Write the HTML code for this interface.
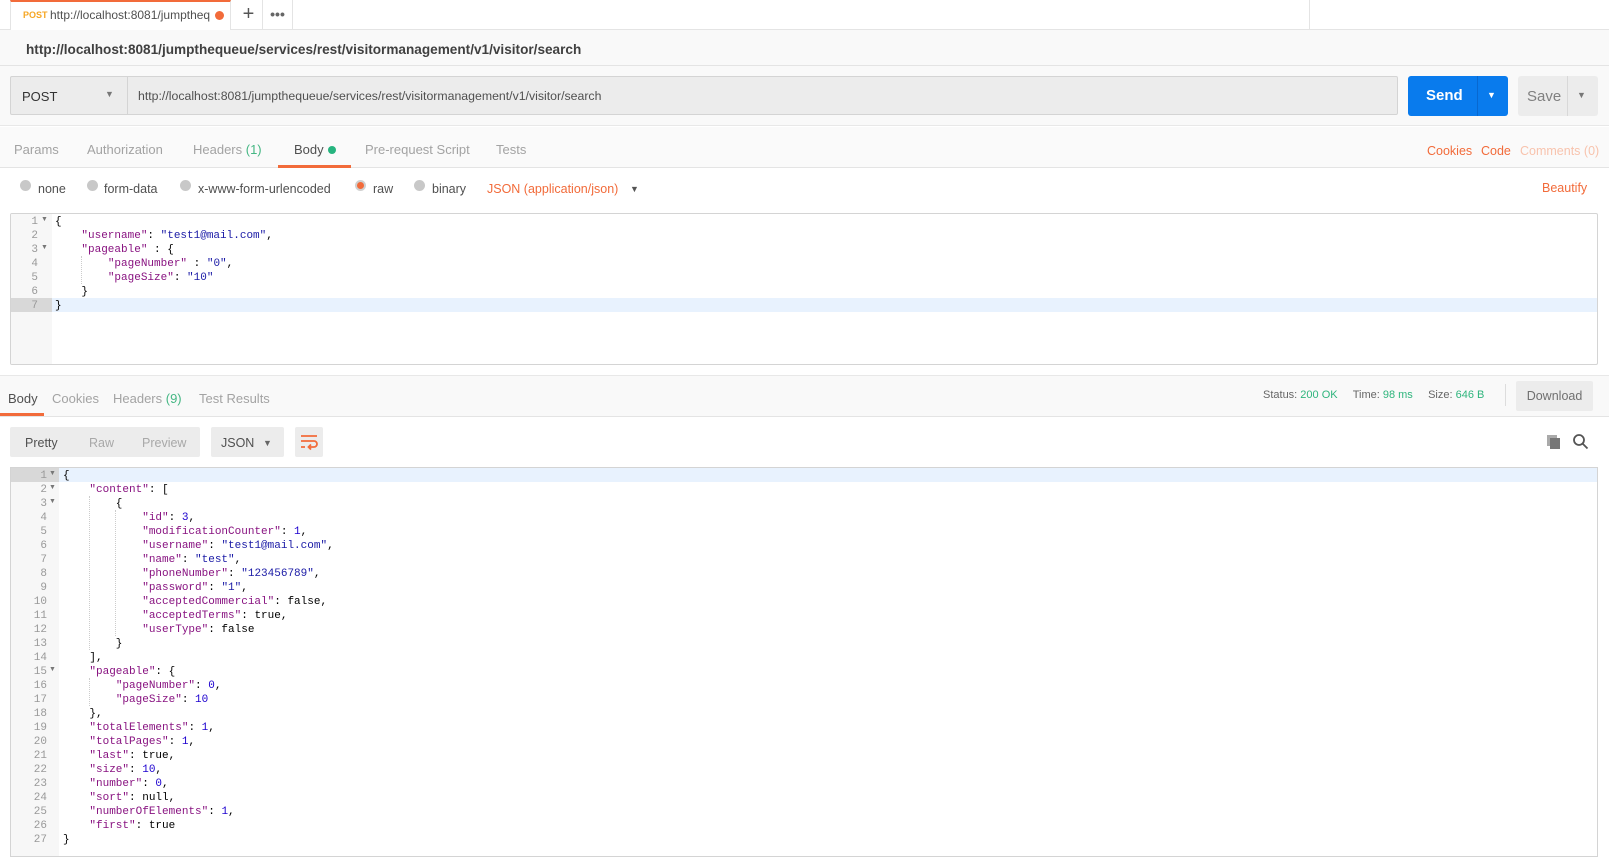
<!DOCTYPE html>
<html><head><meta charset="utf-8"><style>
*{margin:0;padding:0;box-sizing:border-box}
body{width:1609px;height:847px;overflow:hidden;background:#fff;font-family:"Liberation Sans",Arial,sans-serif;position:relative;color:#505050}
.a{position:absolute;white-space:pre}
.code{font-family:"Liberation Mono",monospace;font-size:11px;line-height:14px;color:#000}
.k{color:#881280}
.s{color:#1a1aa6}
.n{color:#1c00cf}
.g{position:absolute;font-family:"Liberation Mono",monospace;font-size:11px;line-height:14px;color:#999;text-align:right}
.tab{font-size:13px;color:#a3a3a3}
.rad{position:absolute;width:11px;height:11px;border-radius:50%;background:#c8c8c8}
</style></head><body>
<!-- tab bar -->
<div class="a" style="left:0;top:0;width:1609px;height:30px;background:#fff;border-bottom:1px solid #e4e4e4"></div>
<div class="a" style="left:10px;top:0;width:221px;height:31px;background:#fff;border-top:2px solid #f26b3a;border-right:1px solid #e4e4e4;border-left:1px solid #e4e4e4"></div>
<div class="a" style="left:23px;top:10px;font-size:9px;font-weight:bold;color:#f6a623">POST</div>
<div class="a" style="left:50px;top:8px;font-size:12px;color:#505050">http://localhost:8081/jumptheq</div>
<div class="rad" style="left:215px;top:11px;width:9px;height:9px;background:#f26b3a"></div>
<div class="a" style="left:235px;top:0;width:28px;height:30px;border-right:1px solid #e4e4e4;font-size:20px;color:#555;text-align:center;line-height:28px">+</div>
<div class="a" style="left:263px;top:0;width:30px;height:30px;border-right:1px solid #e4e4e4;font-size:14px;color:#666;text-align:center;line-height:28px;font-weight:bold">•••</div>
<div class="a" style="left:1309px;top:0;width:1px;height:29px;background:#e4e4e4"></div>
<!-- title -->
<div class="a" style="left:0;top:30px;width:1609px;height:36px;background:#f9f9f9;border-bottom:1px solid #e4e4e4"></div>
<div class="a" style="left:26px;top:42px;font-size:13.6px;color:#404040;font-weight:600">http://localhost:8081/jumpthequeue/services/rest/visitormanagement/v1/visitor/search</div>
<div class="a" style="left:0;top:66px;width:1609px;height:60px;background:#f9f9f9;border-bottom:1px solid #e8e8e8"></div>
<!-- request bar -->
<div class="a" style="left:10px;top:76px;width:1388px;height:39px;background:#ececec;border:1px solid #d4d4d4;border-radius:2px"></div>
<div class="a" style="left:127px;top:77px;width:1px;height:37px;background:#d4d4d4"></div>
<div class="a" style="left:22px;top:89px;font-size:13px;color:#333">POST</div>
<div class="a" style="left:105px;top:89px;font-size:9px;color:#777">▼</div>
<div class="a" style="left:138px;top:89px;font-size:12.3px;color:#505050">http://localhost:8081/jumpthequeue/services/rest/visitormanagement/v1/visitor/search</div>
<div class="a" style="left:1408px;top:76px;width:100px;height:40px;background:#097bed;border-radius:3px"></div>
<div class="a" style="left:1477px;top:76px;width:1px;height:40px;background:#0868d0"></div>
<div class="a" style="left:1426px;top:87px;font-size:15px;font-weight:bold;color:#fff">Send</div>
<div class="a" style="left:1487px;top:90px;font-size:9px;color:#fff">▼</div>
<div class="a" style="left:1518px;top:76px;width:80px;height:40px;background:#ececec;border-radius:3px"></div>
<div class="a" style="left:1567px;top:76px;width:1px;height:40px;background:#d8d8d8"></div>
<div class="a" style="left:1527px;top:88px;font-size:15px;color:#808080">Save</div>
<div class="a" style="left:1577px;top:90px;font-size:9px;color:#777">▼</div>
<!-- req tabs -->
<div class="a" style="left:0;top:127px;width:1609px;height:41px;background:#fafafa;border-bottom:1px solid #e4e4e4"></div>
<div class="a tab" style="left:14px;top:142px">Params</div>
<div class="a tab" style="left:87px;top:142px">Authorization</div>
<div class="a tab" style="left:193px;top:142px">Headers <span style="color:#45b784">(1)</span></div>
<div class="a tab" style="left:294px;top:142px;color:#505050">Body</div>
<div class="rad" style="left:328px;top:146px;width:8px;height:8px;background:#26b47f"></div>
<div class="a" style="left:278px;top:165px;width:73px;height:3px;background:#f26b3a"></div>
<div class="a tab" style="left:365px;top:142px">Pre-request Script</div>
<div class="a tab" style="left:496px;top:142px">Tests</div>
<div class="a" style="left:1427px;top:144px;font-size:12.5px;color:#f26b3a">Cookies</div>
<div class="a" style="left:1481px;top:144px;font-size:12.5px;color:#f26b3a">Code</div>
<div class="a" style="left:1520px;top:144px;font-size:12.5px;color:#f8c3ad">Comments (0)</div>
<!-- radios -->
<div class="rad" style="left:20px;top:180px"></div><div class="a" style="left:38px;top:182px;font-size:12.5px">none</div>
<div class="rad" style="left:87px;top:180px"></div><div class="a" style="left:104px;top:182px;font-size:12.5px">form-data</div>
<div class="rad" style="left:180px;top:180px"></div><div class="a" style="left:198px;top:182px;font-size:12.5px">x-www-form-urlencoded</div>
<div class="rad" style="left:355px;top:180px;background:#f26b3a;border:2px solid #d0d0d0"></div><div class="a" style="left:373px;top:182px;font-size:12.5px">raw</div>
<div class="rad" style="left:414px;top:180px"></div><div class="a" style="left:432px;top:182px;font-size:12.5px">binary</div>
<div class="a" style="left:487px;top:182px;font-size:12.5px;color:#f26b3a">JSON (application/json)</div>
<div class="a" style="left:630px;top:184px;font-size:9px;color:#555">▼</div>
<div class="a" style="left:1542px;top:181px;font-size:12.5px;color:#f26b3a">Beautify</div>
<!-- request editor -->
<div class="a" style="left:10px;top:213px;width:1588px;height:152px;border:1px solid #d4d4d4;border-radius:2px;background:#fff;overflow:hidden">
 <div class="a" style="left:0;top:0;width:41px;height:150px;background:#f7f7f7"></div>
 <div class="a" style="left:41px;top:84px;width:1546px;height:14px;background:#e8f2fe"></div>
 <div class="a" style="left:0;top:84px;width:41px;height:14px;background:#d8d8d8"></div>
 <div class="g" style="left:0;top:1px;width:27px">1
2
3
4
5
6
7</div>
 <div class="a" style="left:30px;top:2px;font-size:7px;color:#777">▼</div>
 <div class="a" style="left:30px;top:30px;font-size:7px;color:#777">▼</div>
 <div class="a" style="left:70px;top:42px;width:0;height:28px;border-left:1px dotted #ccc"></div>
 <div class="a code" style="left:44px;top:1px">{
    <span class="k">"username"</span>: <span class="s">"test1@mail.com"</span>,
    <span class="k">"pageable"</span> : {
        <span class="k">"pageNumber"</span> : <span class="s">"0"</span>,
        <span class="k">"pageSize"</span>: <span class="s">"10"</span>
    }
}</div>
</div>
<!-- response header -->
<div class="a" style="left:0;top:375px;width:1609px;height:42px;background:#f9f9f9;border-top:1px solid #e8e8e8;border-bottom:1px solid #e4e4e4"></div>
<div class="a tab" style="left:8px;top:391px;color:#505050">Body</div>
<div class="a tab" style="left:52px;top:391px">Cookies</div>
<div class="a tab" style="left:113px;top:391px">Headers <span style="color:#45b784">(9)</span></div>
<div class="a tab" style="left:199px;top:391px">Test Results</div>
<div class="a" style="left:0;top:413px;width:44px;height:3px;background:#f26b3a"></div>
<div class="a" style="left:1263px;top:389px;font-size:11px;color:#666">Status: <span style="color:#2fb57d">200 OK</span>&nbsp;&nbsp;&nbsp;&nbsp; Time: <span style="color:#2fb57d">98 ms</span>&nbsp;&nbsp;&nbsp;&nbsp; Size: <span style="color:#2fb57d">646 B</span></div>
<div class="a" style="left:1505px;top:384px;width:1px;height:22px;background:#ddd"></div>
<div class="a" style="left:1516px;top:381px;width:77px;height:30px;background:#ececec;border-radius:2px;font-size:12.5px;color:#707070;text-align:center;line-height:30px">Download</div>
<!-- pretty bar -->
<div class="a" style="left:10px;top:427px;width:190px;height:30px;background:#ececec;border-radius:2px"></div>
<div class="a" style="left:25px;top:436px;font-size:12.5px;color:#505050">Pretty</div>
<div class="a" style="left:89px;top:436px;font-size:12.5px;color:#a8a8a8">Raw</div>
<div class="a" style="left:142px;top:436px;font-size:12.5px;color:#a8a8a8">Preview</div>
<div class="a" style="left:211px;top:427px;width:73px;height:30px;background:#ececec;border-radius:2px"></div>
<div class="a" style="left:221px;top:436px;font-size:12.5px;color:#505050">JSON</div>
<div class="a" style="left:263px;top:438px;font-size:9px;color:#666">▼</div>
<div class="a" style="left:295px;top:427px;width:28px;height:30px;background:#ececec;border-radius:2px"></div>
<svg class="a" style="left:300px;top:433px" width="18" height="18" viewBox="0 0 18 18" fill="none" stroke="#f26b3a" stroke-width="1.8"><path d="M1 3H17M1 8H14a3 3 0 0 1 0 6H9M1 14H5M11 11.5L8.5 14L11 16.5"/></svg>
<svg class="a" style="left:1546px;top:434px" width="16" height="16" viewBox="0 0 16 16"><rect x="1" y="1" width="10" height="11" fill="#aaa"/><rect x="4" y="4" width="10" height="11" fill="#777"/></svg>
<svg class="a" style="left:1572px;top:433px" width="17" height="17" viewBox="0 0 17 17" fill="none" stroke="#555" stroke-width="1.8"><circle cx="7" cy="7" r="5"/><path d="M10.5 10.5L15.5 15.5"/></svg>
<!-- response editor -->
<div class="a" style="left:10px;top:467px;width:1588px;height:390px;border:1px solid #d4d4d4;background:#fff;overflow:hidden">
 <div class="a" style="left:0;top:0;width:48px;height:390px;background:#f7f7f7"></div>
 <div class="a" style="left:48px;top:0;width:1540px;height:14px;background:#e8f2fe"></div>
 <div class="a" style="left:0;top:0;width:48px;height:14px;background:#d8d8d8"></div>
 <div class="g" style="left:0;top:1px;width:36px">1
2
3
4
5
6
7
8
9
10
11
12
13
14
15
16
17
18
19
20
21
22
23
24
25
26
27</div>
 <div class="a" style="left:38px;top:2px;font-size:7px;color:#777">▼</div>
 <div class="a" style="left:38px;top:16px;font-size:7px;color:#777">▼</div>
 <div class="a" style="left:38px;top:30px;font-size:7px;color:#777">▼</div>
 <div class="a" style="left:38px;top:198px;font-size:7px;color:#777">▼</div>
 <div class="a" style="left:78px;top:28px;width:0;height:154px;border-left:1px dotted #ccc"></div>
 <div class="a" style="left:104px;top:42px;width:0;height:126px;border-left:1px dotted #ccc"></div>
 <div class="a" style="left:78px;top:210px;width:0;height:28px;border-left:1px dotted #ccc"></div>
 <div class="a code" style="left:52px;top:1px">{
    <span class="k">"content"</span>: [
        {
            <span class="k">"id"</span>: <span class="n">3</span>,
            <span class="k">"modificationCounter"</span>: <span class="n">1</span>,
            <span class="k">"username"</span>: <span class="s">"test1@mail.com"</span>,
            <span class="k">"name"</span>: <span class="s">"test"</span>,
            <span class="k">"phoneNumber"</span>: <span class="s">"123456789"</span>,
            <span class="k">"password"</span>: <span class="s">"1"</span>,
            <span class="k">"acceptedCommercial"</span>: false,
            <span class="k">"acceptedTerms"</span>: true,
            <span class="k">"userType"</span>: false
        }
    ],
    <span class="k">"pageable"</span>: {
        <span class="k">"pageNumber"</span>: <span class="n">0</span>,
        <span class="k">"pageSize"</span>: <span class="n">10</span>
    },
    <span class="k">"totalElements"</span>: <span class="n">1</span>,
    <span class="k">"totalPages"</span>: <span class="n">1</span>,
    <span class="k">"last"</span>: true,
    <span class="k">"size"</span>: <span class="n">10</span>,
    <span class="k">"number"</span>: <span class="n">0</span>,
    <span class="k">"sort"</span>: null,
    <span class="k">"numberOfElements"</span>: <span class="n">1</span>,
    <span class="k">"first"</span>: true
}</div>
</div>
</body></html>
